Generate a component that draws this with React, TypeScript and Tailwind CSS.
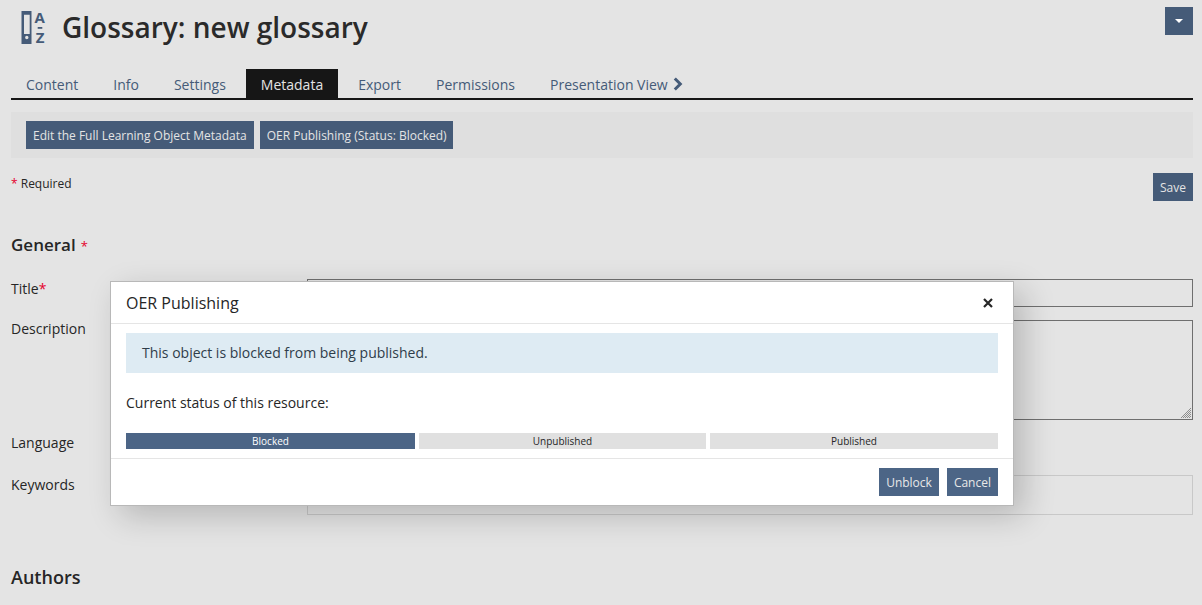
export default function App() {
  const Btn = ({ children, className = "" }: { children: React.ReactNode; className?: string }) => (
    <button className={`h-7 px-[7px] pt-[2px] bg-[#455b78] text-[#e4e4e4] text-xs leading-[26px] whitespace-nowrap ${className}`}>{children}</button>
  );
  const tabs = ["Content", "Info", "Settings", "Metadata", "Export", "Permissions", "Presentation View"];
  return (
    <div className="relative h-[605px] w-full overflow-hidden bg-[#e4e4e4] text-[#262626] font-['Open_Sans',sans-serif] text-sm">
      <div className="px-[11px] pr-[9px]">
        <div className="flex h-[69px] items-start">
          <svg width="28" height="46" viewBox="0 -8 28 46" className="ml-[10px] mt-[2px] shrink-0">
            <path fillRule="evenodd" fill="#455b78" d="M0.5 1h10v33h-10zM3 4.7V24h5.7V4.7zM5.8 25.8a1.7 1.7 0 1 0 0 3.4 1.7 1.7 0 0 0 0-3.4z" />
            <text x="13.5" y="12.5" fontSize="15" fontWeight="700" fill="#455b78">A</text>
            <path d="M16.7 17h4.6v1.8h-4.6z" fill="#455b78" />
            <text x="14.7" y="33" fontSize="15" fontWeight="700" fill="#455b78">Z</text>
          </svg>
          <h1 className="ml-[13px] mt-[8px] text-[28px] leading-[38px] font-semibold text-[#2a2a2a] whitespace-nowrap">Glossary: new glossary</h1>
          <button className="ml-auto mt-[7px] flex h-7 w-[28px] items-center justify-center bg-[#455b78] mr-0">
            <span className="h-0 w-0 border-x-[4px] border-t-[4px] border-x-transparent border-t-white" />
          </button>
        </div>
        <div className="flex h-[31px] border-b-2 border-[#161616]">
          {tabs.map((t) => (
            <div
              key={t}
              className={`flex h-[29px] items-center px-[15px] pt-[2px] mr-[5px] whitespace-nowrap ${t === "Metadata" ? "bg-[#161616] text-[#e4e4e4]" : "text-[#455b78]"}`}
            >
              {t}
              {t === "Presentation View" && (
                <svg width="10" height="14" viewBox="0 0 10 14" className="ml-[5px] -mt-[1px]">
                  <path d="M1.8 1.5 7.3 7 1.8 12.5" fill="none" stroke="#455b78" strokeWidth="3" />
                </svg>
              )}
            </div>
          ))}
        </div>
        <div className="mt-3 flex h-[46px] items-center gap-[6px] bg-[#dfdfdf] pl-[15px]">
          <Btn>Edit the Full Learning Object Metadata</Btn>
          <Btn className="w-[193px]">OER Publishing (Status: Blocked)</Btn>
        </div>
        <div className="mt-[15px] flex h-7 items-start justify-between">
          <div className="text-xs leading-5 pt-[1px]"><span className="text-[#e4002b]">*</span> Required</div>
          <Btn>Save</Btn>
        </div>
        <h2 className="mt-[32px] text-[17px] leading-6 font-semibold">General<span className="ml-[5px] text-[13px] font-normal text-[#e4002b]">*</span></h2>
        <div className="mt-[21px] flex h-7 items-start">
          <div className="w-[296px]">Title<span className="text-[#e4002b]">*</span></div>
          <div className="h-7 flex-1 border border-[#6f6f6f]" />
        </div>
        <div className="mt-[13px] flex h-[100px]">
          <div className="w-[296px] leading-[18px]">Description</div>
          <div className="relative flex-1 border border-[#6f6f6f]">
            <svg width="12" height="12" viewBox="0 0 12 12" className="absolute bottom-0 right-0">
              <path d="M1 11 11 1M3 11l8-8M5 11l6-6M7 11l4-4M9 11l2-2" stroke="#777" strokeWidth="0.8" />
            </svg>
          </div>
        </div>
        <div className="mt-[13px] h-[20px]">Language</div>
        <div className="mt-[22px] flex h-10">
          <div className="w-[296px] leading-5">Keywords</div>
          <div className="flex-1 border border-[#c8c8c8]" />
        </div>
        <h2 className="mt-[50px] text-lg leading-6 font-semibold">Authors</h2>
      </div>

      <div className="absolute left-[110px] top-[281px] w-[904px] h-[225px] border border-[#b8b8b8] bg-white shadow-[10px_10px_30px_rgba(0,0,0,0.2)]">
        <div className="flex h-[42px] items-center justify-between border-b border-[#e5e5e5] pl-[15px] pr-[20px]">
          <div className="text-base">OER Publishing</div>
          <svg width="10" height="10" viewBox="0 0 10 10">
            <path d="M1 1l8 8M9 1l-8 8" stroke="#262626" strokeWidth="2.2" />
          </svg>
        </div>
        <div className="px-[15px] pt-[9px]">
          <div className="flex h-10 items-center bg-[#deebf3] px-4 text-[#2f3d4a]">This object is blocked from being published.</div>
          <div className="mt-[20px] h-5 leading-5">Current status of this resource:</div>
          <div className="mt-[20px] flex h-4 gap-1 text-[10px] leading-4">
            <div className="w-[289px] bg-[#4c6586] text-center text-white">Blocked</div>
            <div className="w-[287px] bg-[#e0e0e0] text-center">Unpublished</div>
            <div className="flex-1 bg-[#e0e0e0] text-center">Published</div>
          </div>
        </div>
        <div className="mt-[9px] flex h-[47px] items-start justify-end gap-2 border-t border-[#e5e5e5] pr-[15px] pt-[9px]">
          <button className="h-7 bg-[#4c6586] px-[7px] pt-[2px] leading-[26px] text-xs text-[#e8e8e8]">Unblock</button>
          <button className="h-7 bg-[#4c6586] px-[7px] pt-[2px] leading-[26px] text-xs text-[#e8e8e8]">Cancel</button>
        </div>
      </div>
    </div>
  );
}
